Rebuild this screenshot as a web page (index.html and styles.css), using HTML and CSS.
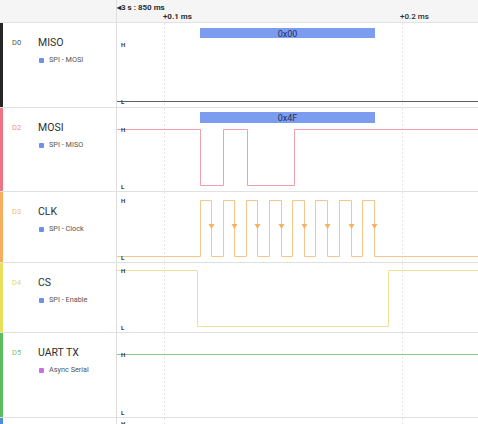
FILE: index.html
```html
<!DOCTYPE html>
<html lang="en">
<head>
<meta charset="utf-8">
<title>Logic capture</title>
<link rel="stylesheet" href="styles.css">
</head>
<body>
<div class="capture">
  <div class="header">
    <div class="header-side"></div>
    <div class="ruler">
      <span class="tick tick-origin">&#9666;3 s : 850 ms</span>
      <span class="tick tick-a">+0.1 ms</span>
      <span class="tick tick-b">+0.2 ms</span>
    </div>
  </div>

  <!-- D0 -->
  <div class="row row-tall c-d0">
    <div class="label">
      <span class="chan">D0</span>
      <div class="names">
        <div class="name">MISO</div>
        <div class="analyzer"><i class="dot dot-spi"></i>SPI - MOSI</div>
      </div>
    </div>
    <svg class="wave" viewBox="117 0 361 84" preserveAspectRatio="none">
      <line class="grid" x1="164.5" y1="0" x2="164.5" y2="84"/>
      <line class="grid" x1="402.5" y1="0" x2="402.5" y2="84"/>
      <rect class="packet" x="200" y="5" width="175" height="10"/>
      <text class="packet-text" x="287.5" y="10.5">0x00</text>
      <path class="trace" d="M117 78.5 H478"/>
      <text class="lvl" x="121" y="21.5">H</text>
      <text class="lvl" x="121" y="78.5">L</text>
    </svg>
  </div>

  <!-- D2 -->
  <div class="row row-tall2 c-d2">
    <div class="label">
      <span class="chan">D2</span>
      <div class="names">
        <div class="name">MOSI</div>
        <div class="analyzer"><i class="dot dot-spi"></i>SPI - MISO</div>
      </div>
    </div>
    <svg class="wave" viewBox="117 0 361 83" preserveAspectRatio="none">
      <line class="grid" x1="164.5" y1="0" x2="164.5" y2="83"/>
      <line class="grid" x1="402.5" y1="0" x2="402.5" y2="83"/>
      <rect class="packet" x="200" y="4" width="175" height="11"/>
      <text class="packet-text" x="287.5" y="10">0x4F</text>
      <path class="trace" d="M117 21.5 H200.5 V77.5 H223.5 V21.5 H247.5 V77.5 H294.5 V21.5 H478"/>
      <text class="lvl" x="121" y="21.5">H</text>
      <text class="lvl" x="121" y="78">L</text>
    </svg>
  </div>

  <!-- D3 -->
  <div class="row row-short c-d3">
    <div class="label">
      <span class="chan">D3</span>
      <div class="names">
        <div class="name">CLK</div>
        <div class="analyzer"><i class="dot dot-spi"></i>SPI - Clock</div>
      </div>
    </div>
    <svg class="wave" viewBox="117 0 361 70" preserveAspectRatio="none">
      <line class="grid" x1="164.5" y1="0" x2="164.5" y2="70"/>
      <line class="grid" x1="402.5" y1="0" x2="402.5" y2="70"/>
      <path class="trace" d="M117 64.5 H200.5 V8.5 H211.5 V64.5 H223.5 V8.5 H234.5 V64.5 H246.5 V8.5 H257.5 V64.5 H269.5 V8.5 H281.5 V64.5 H292.5 V8.5 H304.5 V64.5 H315.5 V8.5 H327.5 V64.5 H339.5 V8.5 H351.5 V64.5 H362.5 V8.5 H374.5 V64.5 H478"/>
      <g class="edge">
        <path d="M208.5 32 h6 l-3 5 z"/>
        <path d="M231.5 32 h6 l-3 5 z"/>
        <path d="M254.5 32 h6 l-3 5 z"/>
        <path d="M278.5 32 h6 l-3 5 z"/>
        <path d="M301.5 32 h6 l-3 5 z"/>
        <path d="M324.5 32 h6 l-3 5 z"/>
        <path d="M348.5 32 h6 l-3 5 z"/>
        <path d="M371.5 32 h6 l-3 5 z"/>
      </g>
      <text class="lvl" x="121" y="8">H</text>
      <text class="lvl" x="121" y="65">L</text>
    </svg>
  </div>

  <!-- D4 -->
  <div class="row row-short2 c-d4">
    <div class="label">
      <span class="chan">D4</span>
      <div class="names">
        <div class="name">CS</div>
        <div class="analyzer"><i class="dot dot-spi"></i>SPI - Enable</div>
      </div>
    </div>
    <svg class="wave" viewBox="117 0 361 69" preserveAspectRatio="none">
      <line class="grid" x1="164.5" y1="0" x2="164.5" y2="69"/>
      <line class="grid" x1="402.5" y1="0" x2="402.5" y2="69"/>
      <path class="trace" d="M117 7.5 H197.5 V63.5 H388.5 V7.5 H478"/>
      <text class="lvl" x="121" y="7.5">H</text>
      <text class="lvl" x="121" y="64">L</text>
    </svg>
  </div>

  <!-- D5 -->
  <div class="row row-tall c-d5">
    <div class="label">
      <span class="chan">D5</span>
      <div class="names">
        <div class="name">UART TX</div>
        <div class="analyzer"><i class="dot dot-serial"></i>Async Serial</div>
      </div>
    </div>
    <svg class="wave" viewBox="117 0 361 84" preserveAspectRatio="none">
      <line class="grid" x1="164.5" y1="0" x2="164.5" y2="84"/>
      <line class="grid" x1="402.5" y1="0" x2="402.5" y2="84"/>
      <path class="trace" d="M117 21.5 H478"/>
      <text class="lvl" x="121" y="21.5">H</text>
      <text class="lvl" x="121" y="79">L</text>
    </svg>
  </div>

  <!-- D6 (continues below the fold) -->
  <div class="row row-short c-d6">
    <div class="label"></div>
    <svg class="wave" viewBox="117 0 361 70" preserveAspectRatio="none">
      <line class="grid" x1="164.5" y1="0" x2="164.5" y2="70"/>
      <line class="grid" x1="402.5" y1="0" x2="402.5" y2="70"/>
      <text class="lvl" x="121" y="5">H</text>
    </svg>
  </div>
</div>
</body>
</html>
```

FILE: styles.css
```css
* {
  box-sizing: border-box;
}

html, body {
  margin: 0;
  padding: 0;
  background: #ffffff;
  overflow: hidden;
}

body {
  font-family: Roboto, "Noto Sans", "Liberation Sans", sans-serif;
  color: #333333;
}

.capture {
  width: 478px;
  display: flex;
  flex-direction: column;
}

/* time ruler */
.header {
  display: flex;
  height: 23px;
  background: #f5f5f5;
  border-bottom: 1px solid #e2e2e2;
}

.header-side {
  width: 117px;
  flex: none;
  border-right: 1px solid #dedede;
}

.ruler {
  position: relative;
  flex: 1;
}

.tick {
  position: absolute;
  font-size: 8px;
  line-height: 10px;
  font-weight: 700;
  color: #2e2e2e;
  white-space: nowrap;
}

.tick-origin {
  left: 0;
  top: 3px;
}

.tick-a {
  left: 46px;
  top: 12px;
}

.tick-b {
  left: 283px;
  top: 12px;
  font-weight: 500;
}

/* channel rows */
.row {
  display: flex;
  border-bottom: 1px solid #e0e0e0;
}

.row-tall { height: 85px; }
.row-tall2 { height: 84px; }
.row-short { height: 71px; }
.row-short2 { height: 70px; }

.label {
  width: 117px;
  flex: none;
  display: flex;
  border-left: 3px solid var(--chan);
  border-right: 1px solid #dedede;
  padding: 13px 0 0 9px;
}

.chan {
  width: 26px;
  font-size: 7.5px;
  line-height: 14px;
  color: var(--chan-text);
}

.names {
  display: flex;
  flex-direction: column;
}

.name {
  font-size: 10.5px;
  line-height: 14px;
  color: #2f2f2f;
}

.analyzer {
  display: flex;
  align-items: center;
  margin-top: 5px;
  font-size: 7.3px;
  line-height: 10px;
  color: #555555;
}

.dot {
  width: 5px;
  height: 5px;
  border-radius: 1px;
  margin: 0 5px 0 1px;
}

.dot-spi { background: #6f8fe6; }
.dot-serial { background: #c86ee0; }

.wave {
  flex: 1;
  height: 100%;
  display: block;
}

.grid {
  stroke: #e6e6e6;
  stroke-width: 1;
  stroke-dasharray: 2 2;
}

.trace {
  fill: none;
  stroke: var(--trace);
  stroke-width: 1;
}

.edge path {
  fill: var(--edge);
}

.packet {
  fill: #7c9cf0;
}

.packet-text {
  font-size: 9px;
  fill: #283050;
  text-anchor: middle;
  dominant-baseline: central;
}

.lvl {
  font-size: 6px;
  font-weight: 700;
  fill: #333333;
  dominant-baseline: central;
}

/* per-channel colours */
.c-d0 { --chan: #262626; --chan-text: #555555; --trace: #5e5e5e; }
.c-d2 { --chan: #f07384; --chan-text: #ee8a98; --trace: #f0a0ab; }
.c-d3 { --chan: #f6ae5c; --chan-text: #f3b673; --trace: #f4c58c; --edge: #f1b463; }
.c-d4 { --chan: #e7e05a; --chan-text: #e2d86a; --trace: #ebe296; }
.c-d5 { --chan: #5cbd5c; --chan-text: #7cc07c; --trace: #8fca8f; }
.c-d6 { --chan: #4a8fe0; --chan-text: #4a8fe0; --trace: #8ab4ea; }
```
